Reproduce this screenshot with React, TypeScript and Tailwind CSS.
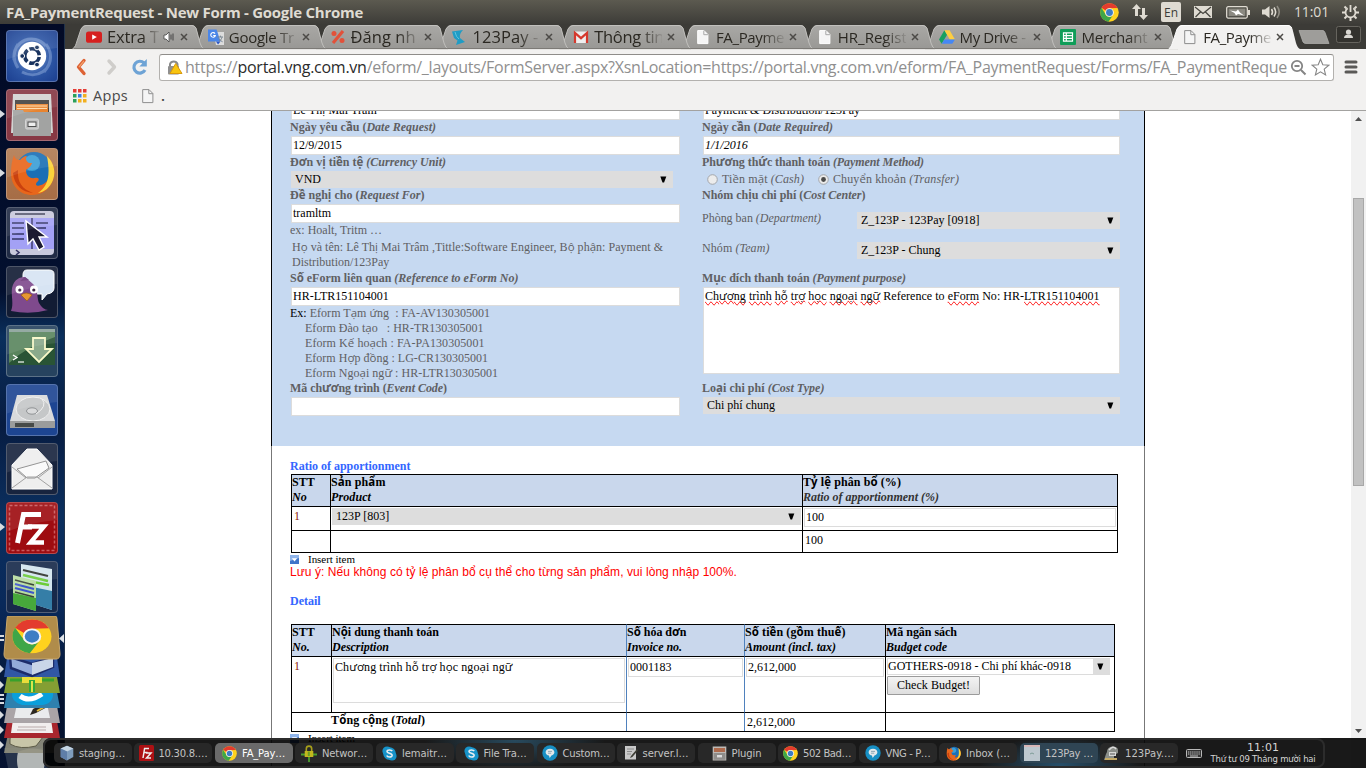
import { useLayoutEffect, useRef } from "react";
import type { ReactNode } from "react";

/* Text that is spaced out (or in) to take up a given width. */
function Fit({ w, className = "", children }: { w: number; className?: string; children: ReactNode }) {
  const ref = useRef<HTMLSpanElement>(null);
  useLayoutEffect(() => {
    const el = ref.current;
    if (!el) return;
    el.style.letterSpacing = "0px";
    const natural = el.getBoundingClientRect().width;
    const n = (el.textContent || "").length || 1;
    el.style.letterSpacing = `${(w - natural) / n}px`;
  }, [w]);
  return (
    <span ref={ref} className={`inline-block whitespace-pre ${className}`}>
      {children}
    </span>
  );
}

/* Serif text in which the stacked Vietnamese letters come from the sans face. */
function Vi({ children }: { children: string }) {
  const parts = children.split(/([ơƯưƠ\u1EA0-\u1EF9]+)/);
  return (
    <>
      {parts.map((p, i) =>
        i % 2 ? (
          <span key={i} className="font-['Open_Sans','Noto_Sans',sans-serif] text-[11.5px] leading-none">
            {p}
          </span>
        ) : (
          p
        ),
      )}
    </>
  );
}

function Label({ vi, en, w, close = "" }: { vi: string; en: string; w: number; close?: string }) {
  return (
    <div className="h-[15px] font-bold leading-[15px] text-[#5f6063]">
      <Fit w={w}>
        <Vi>{vi}</Vi>
        <i>{en}</i>
        {close}
      </Fit>
    </div>
  );
}

function Field({ children, className = "" }: { children?: ReactNode; className?: string }) {
  return (
    <div className={`ml-px mt-px h-[19px] border border-[#dcdcdc] bg-white pl-px leading-[17px] text-black ${className}`}>
      {children}
    </div>
  );
}

function Down() {
  return (
    <svg width="7" height="7" viewBox="0 0 7 7" className="shrink-0">
      <path d="M0.300 0.500H6.300L4.100 6.500H2.500Z" fill="#000" />
    </svg>
  );
}

function Select({ children, className = "" }: { children: ReactNode; className?: string }) {
  return (
    <div className={`flex h-[17px] items-center justify-between bg-[#dddddd] pl-1 pr-[6px] leading-[17px] text-black ${className}`}>
      <span>{children}</span>
      <Down />
    </div>
  );
}

function Radio({ on = false }: { on?: boolean }) {
  return (
    <svg width="11" height="11" viewBox="0 0 11 11">
      <circle cx="5.5" cy="5.5" r="4.8" fill="#ececec" stroke="#a3a6ab" />
      {on && <circle cx="5.5" cy="5.5" r="2.4" fill="#4a4a4a" />}
    </svg>
  );
}

/* ---------- small icons ---------- */

function Chrome({ s, x = 0, y = 0 }: { s: number; x?: number; y?: number }) {
  return (
    <svg width={s} height={s} x={x} y={y} viewBox="0 0 40 40" className="shrink-0">
      <circle cx="20" cy="20" r="19.5" fill="#ffd21e" />
      <path d="M3.1 10.2A19.5 19.5 0 0 1 37 10.5L20 11.2A9 9 0 0 0 12 16Z" fill="#e33b2e" />
      <path d="M3.1 10.2A19.5 19.5 0 0 0 17.8 39.4L28 24.5A9 9 0 0 1 12.2 24.5Z" fill="#3fa648" />
      <circle cx="20" cy="20" r="9.2" fill="#f3f4f5" />
      <circle cx="20" cy="20" r="7.2" fill="#3d7dc4" />
    </svg>
  );
}

function Firefox({ s }: { s: number }) {
  return (
    <svg width={s} height={s} viewBox="0 0 46 46" className="shrink-0">
      <circle cx="25" cy="20" r="18" fill="#1c6fb5" />
      <circle cx="23" cy="13" r="8" fill="#49b4e4" opacity=".7" />
      <path d="M5 5C6 9 8 10 11 10C13 8 15 6 18 6C16 9 17 11 20 13H23C22 17 19 18 17 20C17 25 20 29 26 28C30 27 31 30 28 32C24 37 33 37 38 31C42 26 43 18 38 6C45 13 47 22 44 30C40 41 31 45 23 45C11 45 2 36 2 23C2 16 3 10 5 5Z" fill="#e8661b" />
      <path d="M38 6C45 13 47 22 44 30C41 38 35 42 29 43C38 37 42 28 38 6Z" fill="#fbd33c" />
      <path d="M4 23C5 35 13 42 24 43C13 39 8 32 9 20Z" fill="#c9410f" />
    </svg>
  );
}

function Skype() {
  return (
    <svg width="15" height="15" viewBox="0 0 15 15" className="shrink-0">
      <circle cx="5" cy="5" r="4.6" fill="#1793c9" />
      <circle cx="10" cy="10" r="4.6" fill="#1793c9" />
      <circle cx="7.5" cy="7.5" r="6.3" fill="#1793c9" />
      <path d="M10.2 5.2C9.5 3.7 5.2 3.5 5 5.6C5 7.7 10.2 7 10.1 9.4C9.8 11.6 5.4 11.5 4.8 9.6" fill="none" stroke="#e8eef2" strokeWidth="1.6" />
    </svg>
  );
}

function Chat() {
  return (
    <svg width="16" height="16" viewBox="0 0 16 16" className="shrink-0">
      <circle cx="8" cy="8" r="7.7" fill="#178fc4" />
      <path d="M8 3.7C5.3 3.7 3.6 5.3 3.6 7.2C3.6 9.2 5.2 10.4 6.9 10.6L7.7 13L9.5 10.4C11.2 10 12.4 8.8 12.4 7.2C12.4 5.3 10.7 3.7 8 3.7Z" fill="#e2e8eb" />
      <path d="M6 6.4H10M6 8.2H9.2" stroke="#7b99aa" strokeWidth=".8" />
    </svg>
  );
}

function Cube() {
  return (
    <svg width="14" height="16" viewBox="0 0 14 16" className="shrink-0">
      <path d="M7 .7L13.3 3.5V12L7 15.4L.7 12V3.5Z" fill="#7f9dbd" />
      <path d="M7 .7L13.3 3.5L7 6.4L.7 3.5Z" fill="#c5d5e3" />
      <path d="M7 6.4V15.4L.7 12V3.5Z" fill="#5f7ea8" />
    </svg>
  );
}

function FzSmall() {
  return (
    <svg width="15" height="16" viewBox="0 0 15 16" className="shrink-0">
      <rect width="15" height="16" rx="1.5" fill="#ad1114" />
      <path d="M4 13L5.6 3.5H10M4.8 7.6H8.6M7 8H12L7.5 13H12" fill="none" stroke="#eee" strokeWidth="1.5" />
    </svg>
  );
}

function Netlock() {
  return (
    <svg width="16" height="17" viewBox="0 0 16 17" className="shrink-0">
      <path d="M0 9.5H16M8 9V17" stroke="#49a02c" strokeWidth="1.8" />
      <rect x="3.7" y="6" width="8.6" height="6" fill="#c2b71f" />
      <path d="M5.3 6V3.8A2.7 2.7 0 0 1 10.7 3.8V6" fill="none" stroke="#a8a01a" strokeWidth="1.6" />
      <rect x="6.8" y="6.5" width="2" height="4.5" fill="#6a9e22" />
    </svg>
  );
}

function Notepad() {
  return (
    <svg width="14" height="16" viewBox="0 0 14 16" className="shrink-0">
      <rect x="1" y="1" width="11" height="13.5" fill="#c9c9c9" />
      <path d="M3 4H10M3 6.5H8M3 9H7" stroke="#8a8a8a" />
      <path d="M13 4L7 11L6 13L8.3 12L14 5.4Z" fill="#3d3d34" />
    </svg>
  );
}

function Cabinet() {
  return (
    <svg width="15" height="15" viewBox="0 0 15 15" className="shrink-0">
      <rect x=".7" y=".5" width="13.6" height="14" fill="#bdb9b5" />
      <path d="M2 3H13M2 5H13" stroke="#a8502a" strokeWidth="1.4" />
      <rect x="1.6" y="7" width="11.8" height="6.8" fill="#8f8d8a" />
      <rect x="5" y="9" width="5" height="2.4" fill="#ddd" />
    </svg>
  );
}

function PageShot() {
  return (
    <svg width="16" height="16" viewBox="0 0 16 16" className="shrink-0">
      <rect width="16" height="16" fill="#bdc8cf" />
      <rect width="16" height="2" fill="#d8b7b7" />
      <path d="M6 9Q8 7 10 9" stroke="#7e9c97" fill="none" />
    </svg>
  );
}

function Stamp() {
  return (
    <svg width="16" height="16" viewBox="0 0 16 16" className="shrink-0">
      <path d="M3 7C3 0 14 0 14 5V8L10 10V15H0L2 9Z" fill="#8b8e89" />
      <path d="M5 5Q9 0 12 4" stroke="#dadada" strokeWidth="1.6" fill="none" />
      <path d="M1 14H13" stroke="#c6ab65" strokeWidth="2" />
      <rect x="5" y="7" width="7" height="4" fill="#d7d8d6" />
      <path d="M6 9H11" stroke="#555" />
    </svg>
  );
}

function Doc({ line = "#fff" }: { line?: string }) {
  return (
    <svg width="16" height="16" viewBox="0 0 16 16" className="shrink-0">
      <path d="M2.7 1.6H9L12.9 5.5V14.6H2.7Z" fill="#f5f5f5" stroke={line} strokeWidth="1" />
      <path d="M8.8 1.6V5.7H12.9" fill="none" stroke={line === "#fff" ? "#a8a8a8" : line} strokeWidth="1" />
    </svg>
  );
}

/* ---------- browser tabs ---------- */

const ytIcon = (
  <svg width="16" height="16" viewBox="0 0 16 16">
    <rect y="2.4" width="16" height="11.4" rx="2.6" fill="#d6201f" />
    <path d="M6.2 5.4L10.8 8.1L6.2 10.8Z" fill="#fff" />
  </svg>
);
const trIcon = (
  <svg width="16" height="16" viewBox="0 0 16 16">
    <path d="M5 3H16V16H8Z" fill="#dcdcdc" />
    <path d="M0 .5H8.6L12.5 12.6H0Z" fill="#4a86e8" />
    <path d="M7 4.6A2.3 2.3 0 1 0 7.3 6.5H5.2" stroke="#fff" strokeWidth="1.1" fill="none" />
    <path d="M8 12.6H12.5L10 15.5Z" fill="#2a56c6" />
    <path d="M9.5 8H15M12.4 6.6V8M14 8.2C13.4 10.5 12 11.8 11 12.4M11 9.5Q12.4 12 14.6 12.8" stroke="#7a8791" fill="none" />
  </svg>
);
const pctIcon = (
  <svg width="16" height="16" viewBox="0 0 16 16">
    <path d="M13 2L3 14" stroke="#e2513a" strokeWidth="3.2" />
    <circle cx="4" cy="4.6" r="2.5" fill="#e2513a" />
    <circle cx="12" cy="11.6" r="2.5" fill="#e2513a" />
  </svg>
);
const payIcon = (
  <svg width="16" height="16" viewBox="0 0 16 16">
    <path d="M1 2.5L12 1Q8 5 9 9L14 13L5 16L6.5 11.5L3 9Z" fill="#1f9cc5" />
    <path d="M4 3Q5 8 8 10" stroke="#5fc4de" fill="none" />
  </svg>
);
const gmIcon = (
  <svg width="16" height="16" viewBox="0 0 16 16">
    <rect x="1" y="2.6" width="14" height="11.4" rx="1" fill="#eee" />
    <path d="M2 14V4L8 9.2L14 4V14" fill="none" stroke="#d5392d" strokeWidth="2.2" />
  </svg>
);
const driveIcon = (
  <svg width="16" height="16" viewBox="0 0 16 16">
    <path d="M5.4 1.2L0 10.4L2.7 14.8L8.1 5.7Z" fill="#18a060" />
    <path d="M5.4 1.2H10.6L16 10.4H10.8Z" fill="#fdce41" />
    <path d="M2.7 14.8L5.4 10.4H16L13.3 14.8Z" fill="#4587f4" />
  </svg>
);
const sheetIcon = (
  <svg width="16" height="16" viewBox="0 0 16 16">
    <rect width="16" height="16" rx="1" fill="#0f9d58" />
    <path d="M3.5 3.8H12.5V12.2H3.5ZM3.5 6.6H12.5M3.5 9.4H12.5M6.3 3.8V12.2" fill="none" stroke="#fff" strokeWidth="1.2" />
  </svg>
);

type TabInfo = { icon: ReactNode; title: string; w: number; big?: boolean; sound?: boolean; active?: boolean };
const tabs: TabInfo[] = [
  { icon: ytIcon, title: "Extra T", w: 52, big: true, sound: true },
  { icon: trIcon, title: "Google Tr", w: 65 },
  { icon: pctIcon, title: "Đăng nh", w: 65, big: true },
  { icon: payIcon, title: "123Pay -", w: 66, big: true },
  { icon: gmIcon, title: "Thông tin", w: 70, big: true },
  { icon: <Doc />, title: "FA_Payme", w: 68 },
  { icon: <Doc />, title: "HR_Regist", w: 69 },
  { icon: driveIcon, title: "My Drive -", w: 66 },
  { icon: sheetIcon, title: "Merchant", w: 66 },
  { icon: <Doc line="#8d8d8d" />, title: "FA_Payme", w: 68, active: true },
];

function Tab({ t, z }: { t: TabInfo; z: number }) {
  return (
    <div className="relative flex h-[25px] w-[121.8px] shrink-0 items-center pl-[14px]" style={{ zIndex: z }}>
      <svg className="absolute left-0 top-0 overflow-visible" width="131" height="25" viewBox="0 0 131 25">
        <defs>
          <linearGradient id="tabgrey" x1="0" y1="0" x2="0" y2="1">
            <stop offset="0" stopColor="#a9a8a5" />
            <stop offset="1" stopColor="#999895" />
          </linearGradient>
        </defs>
        <path
          d="M0 25C3 24 4 20 5 17L9 5Q11 1 14 1H120Q123 1 124.500 5L128 19Q129.500 24 132 25Z"
          fill={t.active ? "#f2f1f0" : "url(#tabgrey)"}
          stroke="none"
        />
        {!t.active && (
          <>
            <path d="M124 4L128 19Q129.500 24 132 25" stroke="#c4c3c0" strokeWidth="0.900" fill="none" />
            <path d="M0 24.600H132" stroke="#75736f" strokeWidth="0.900" />
          </>
        )}
        <path d="M1 24.500C3.500 23 4 20 5 17L9 5Q11 1.500 14 1.500H120Q122 1.500 124 4" stroke={t.active ? "#fff" : "#c4c3c0"} strokeWidth="0.900" fill="none" />
      </svg>
      <span className="relative h-4 w-4">{t.icon}</span>
      <span
        className={`relative ml-[5px] h-[24px] overflow-hidden font-['Open_Sans','Noto_Sans',sans-serif] leading-[24px] text-[#2b2822] [mask-image:linear-gradient(to_right,#000_68%,transparent_104%)] ${
          t.sound ? "w-[52px]" : "w-[68px]"
        } ${t.big ? "text-[16.5px]" : "text-[15px] font-medium"}`}
      >
        <Fit w={t.w}>{t.title}</Fit>
      </span>
      {t.sound && (
        <svg className="relative ml-[4px]" width="12" height="12" viewBox="0 0 12 12">
          <path d="M1 4H3L6 1V11L3 8H1Z" fill="#fff" stroke="#444" strokeWidth=".8" />
          <path d="M8 3.5V8.5M10 2.5V9.5" stroke="#444" />
        </svg>
      )}
      <svg className="relative ml-[5px]" width="8" height="8" viewBox="0 0 8 8">
        <path d="M1 1L7 7M7 1L1 7" stroke="#4c4a47" strokeWidth="1.5" />
      </svg>
    </div>
  );
}

/* ---------- launcher ---------- */

function Tile({ bg, run = false, children }: { bg: string; run?: boolean; children: ReactNode }) {
  return (
    <div className="relative h-[52px] w-[65px] pl-[6px]">
      {run && (
        <svg className="absolute left-0 top-[21px]" width="5" height="8" viewBox="0 0 5 8">
          <path d="M0 0L5 4L0 8Z" fill="#d7dbe0" />
        </svg>
      )}
      <div className={`h-[52px] w-[52px] overflow-hidden rounded-[4px] border border-white/25 ${bg}`}>
        <svg width="50" height="50" viewBox="1 1 50 50">
          {children}
          <path d="M0 0H52V18Q26 20 0 30Z" fill="#fff" opacity=".09" />
        </svg>
      </div>
    </div>
  );
}

function Launcher() {
  return (
    <div className="flex w-[65px] shrink-0 flex-col gap-[7px] border-r border-[#20324a] bg-[linear-gradient(to_bottom,#020a26_0%,#03102f_36%,#0a2f5c_42%,#071c42_54%,#0b2f5e_66%,#09295a_78%,#04122f_92%,#061331_100%)] pt-[6px]">
      <Tile bg="bg-[radial-gradient(circle,#8fb0de_0%,#2c55a4_55%,#1c3f90_100%)]">
        <path d="M8 30C6 10 28 2 40 16M44 22C48 40 30 50 16 42M12 38Q4 26 12 14M40 14Q50 28 38 42" stroke="#9bb6e2" strokeWidth="3" fill="none" opacity=".45" />
        <circle cx="26" cy="26" r="14.2" fill="#fff" />
        <circle cx="26" cy="26" r="7.3" fill="none" stroke="#19335f" strokeWidth="3.6" strokeDasharray="13.2 2.1" strokeDashoffset="-1" />
        <circle cx="16.2" cy="26" r="2.4" fill="#19335f" stroke="#fff" />
        <circle cx="31" cy="17.4" r="2.4" fill="#19335f" stroke="#fff" />
        <circle cx="31" cy="34.6" r="2.4" fill="#19335f" stroke="#fff" />
      </Tile>
      <Tile bg="bg-[#873844]" run>
        <path d="M7 5H45L47 44H5Z" fill="#d3d3d2" />
        <path d="M9 11H43V24H9Z" fill="#454240" />
        <path d="M10 15H42V24H10Z" fill="#e88430" />
        <path d="M11 17H41M11 19.5H41" stroke="#ffd9a6" />
        <path d="M7 21H17L18 23H45V47H7Z" fill="#a2a3a2" />
        <rect x="19.5" y="30" width="13" height="10" rx="1.5" fill="#bfbfbf" stroke="#d5d5d5" />
        <rect x="22" y="33" width="8" height="4.5" fill="#eee" stroke="#4e4e4e" />
      </Tile>
      <Tile bg="bg-[linear-gradient(to_bottom,#b17a52,#a66d46)]" run>
        <g transform="translate(3 2)">
          <Firefox s={46} />
        </g>
      </Tile>
      <Tile bg="bg-[#202b45]">
        <rect x="4" y="4" width="44" height="44" rx="4" fill="#c8c9dc" />
        <rect x="4" y="11" width="44" height="31" fill="#a3a1f5" />
        <path d="M9 7H39" stroke="#3b3b55" strokeWidth="1.4" />
        <path d="M26 11V42M6 16H18M6 21H18M6 27H18M6 32H18M30 16H42M30 21H40" stroke="#353464" strokeWidth="1.4" />
        <path d="M10 43L13 45.5L10 48" stroke="#353464" fill="none" strokeWidth="1.6" />
        <path d="M20 14L22 37L27 32L33 43L38 40L33 30H41Z" fill="#1b1a31" stroke="#fff" strokeWidth="1.4" />
      </Tile>
      <Tile bg="bg-[#121c34]">
        <path d="M21 4Q17 4 17 9V23Q17 28 23 28H36V34L41 28Q48 27 48 22V8Q48 4 43 4Z" fill="#d7e4f3" stroke="#fff" />
        <path d="M5 45C8 38 5 31 6 22C8 13 14 11 19 11L27 18C32 22 31 33 33 37Q37 44 42 44Q24 49 5 45Z" fill="#7f4a8d" />
        <path d="M19 11L14 15L23 14Z" fill="#6a3578" />
        <circle cx="13.5" cy="23.5" r="4" fill="#fff" />
        <circle cx="28" cy="23.5" r="4" fill="#fff" />
        <circle cx="13.8" cy="24" r="1.6" fill="#3a2340" />
        <circle cx="27.8" cy="24" r="1.6" fill="#3a2340" />
        <path d="M15 29Q20 25 26 29L21 35Z" fill="#e69731" stroke="#9a5a14" strokeWidth=".7" />
      </Tile>
      <Tile bg="bg-[#26435f]">
        <rect x="3" y="4" width="46" height="36" fill="#295435" />
        <path d="M3 6H49V12Q20 22 3 38Z" fill="#6f9a70" opacity=".7" />
        <path d="M3 5.5H49" stroke="#8ba29a" strokeWidth="3" />
        <path d="M7 30L11 32.5L7 35" stroke="#fff" fill="none" strokeWidth="1.3" />
        <path d="M12 37H18" stroke="#cfd9d0" strokeWidth="1.5" />
        <path d="M27 13H39V24H46L33 37L20 24H27Z" fill="#8aa98b" stroke="#f8f8c8" strokeWidth="1.8" />
      </Tile>
      <Tile bg="bg-[#1d4592]">
        <path d="M11 11H41L49 37H4Z" fill="#d9dadb" />
        <ellipse cx="27" cy="25" rx="17" ry="12" fill="#c5c7c8" stroke="#f0f0f0" />
        <ellipse cx="26" cy="27" rx="5.5" ry="3.2" fill="#d9dadb" stroke="#8f9294" />
        <path d="M36 15Q42 22 30 30" stroke="#f0f0f0" fill="none" />
        <path d="M4 37H49V44H4Z" fill="#9b9c9c" />
        <path d="M9 39H28V43H9Z" fill="#474a48" />
      </Tile>
      <Tile bg="bg-[#18243e]">
        <path d="M6 22L21 6H31L46 22V46H6Z" fill="#eeeeee" stroke="#fff" />
        <path d="M11 26L40 18L43 25L29 35H21Z" fill="#fafafa" stroke="#8f8f8f" />
        <path d="M6 45L21 34H31L46 45M6 24L20 35M46 24L32 35" stroke="#a2a2a2" fill="none" />
      </Tile>
      <Tile bg="bg-[#9e0c10]" run>
        <rect x="3.5" y="3.5" width="45" height="45" fill="none" stroke="#c85b5e" strokeWidth="1.5" strokeDasharray="3 2" />
        <path d="M11.500 41L17.500 12.500H35M14.500 25H26" fill="none" stroke="#fff" strokeWidth="5" />
        <path d="M22 24.500H38L24.500 40.500H38" fill="none" stroke="#fff" strokeWidth="4.400" />
      </Tile>
      <Tile bg="bg-[#17294a]">
        <path d="M15 3L46 8V49L15 39Z" fill="#d3e5ee" />
        <path d="M17 24L46 30V49L17 40Z" fill="#357ea7" />
        <path d="M17 9L42 15" stroke="#30342d" strokeWidth="2" />
        <path d="M17 14L42 20M17 19L43 24" stroke="#6dcc3a" strokeWidth="2.6" />
        <path d="M7 14L30 20V50L7 43Z" fill="#b8dca0" />
        <path d="M7 32L30 37V50L7 43Z" fill="#47a83b" />
        <path d="M9 19L28 24M9 31L28 36" stroke="#39433a" strokeWidth="1.5" />
        <path d="M9 23L28 28M9 27L28 32" stroke="#3e55cb" strokeWidth="2" />
      </Tile>
      <svg className="-mt-[4px] shrink-0" width="64" height="152" viewBox="0 0 64 152">
        <path d="M4 132L60 132L58 150Q56 152 50 152H8Z" fill="#26334b" />
        <path d="M18 136Q16 144 18 152H44Q46 140 43 134Q30 130 18 136Z" fill="#b2b6b5" />
        <path d="M8 118H56L60 137H4Z" fill="#92917f" opacity=".9" />
        <path d="M10 124Q9 118 20 120L34 118Q44 114 43 121L36 130Q20 134 10 128Z" fill="#c8c5a8" stroke="#5e5c48" />
        <path d="M7 105H57L60 122H4Z" fill="#a8262d" />
        <path d="M13 103H51L53 117H11Z" fill="#f1eeee" />
        <path d="M18 111H46M17 114H46" stroke="#b9aaaa" />
        <path d="M7 90H57L60 107H4Z" fill="#aaa4a7" />
        <path d="M17 88H47L50 102H14Z" fill="#eaebed" />
        <path d="M30 99L33 93L46 86L49 90L36 97Z" fill="#2c2720" />
        <path d="M37 95L46 90" stroke="#e8bd3d" strokeWidth="2" />
        <path d="M7 76H57L60 92H4Z" fill="#2f80ae" />
        <path d="M12 76H53Q54 87 43 89H22Q11 86 12 76Z" fill="#0a9fdb" />
        <path d="M20 80Q29 87 42 78" stroke="#fff" strokeWidth="5" fill="none" />
        <path d="M7 61H57L60 77H4Z" fill="#849f33" />
        <path d="M10 64H54" stroke="#38a12c" strokeWidth="3" />
        <rect x="22" y="61" width="20" height="6" fill="#e9dd3a" />
        <path d="M32 64V76" stroke="#30aa38" strokeWidth="6" />
        <path d="M32 65V76" stroke="#dce44b" strokeWidth="2" />
        <path d="M7 42H57L60 61H4Z" fill="#3157a4" />
        <path d="M10 41L32 48L53 41V51L32 60L11 52Z" fill="#93aada" stroke="#1c2c6b" strokeWidth="2.5" />
        <path d="M32 47L53 42V51L32 59Z" fill="#c9d6e8" />
        <path d="M8 0H55Q57 0 57 3L60 38Q60 43 56 43H8Q4 43 4 38L7 3Q7 0 8 0Z" fill="#b08c4a" stroke="#c9a86c" />
        <g transform="translate(12 3) scale(1 .87)">
          <Chrome s={40} />
        </g>
        <path d="M64 18V27L59 22.5Z" fill="#dfe3e8" />
        <path d="M0 20H4M0 24H4M0 79H4M0 83H4M0 87H4" stroke="#d7dbe0" strokeWidth="2" />
        <path d="M0 49L4 53L0 57ZM0 65L4 69L0 73ZM0 95L4 99L0 103ZM0 110L4 114L0 118ZM0 125L4 129L0 133Z" fill="#d7dbe0" />
      </svg>
    </div>
  );
}

/* ---------- top panel ---------- */

function TopPanel() {
  return (
    <div className="flex h-6 shrink-0 items-center justify-between bg-[linear-gradient(to_bottom,#5c5a50,#3d3c38)] pl-[6px] font-['Open_Sans','Noto_Sans',sans-serif] text-[#dfdbd2]">
      <Fit w={357} className="text-[15px] font-bold leading-6">
        FA_PaymentRequest - New Form - Google Chrome
      </Fit>
      <div className="flex h-6 items-center pr-[7px]">
        <Chrome s={19} />
        <svg className="ml-[12px]" width="18" height="18" viewBox="0 0 18 18">
          <path d="M5.5 1L10 6H7V13H4V6H1ZM12.5 17L8 12H11V5H14V12H17Z" fill="#dfdbd2" />
        </svg>
        <span className="ml-[12px] flex h-5 w-5 items-center justify-center rounded-[2px] bg-[#dfdbd2] pt-px text-[12px] font-medium text-[#3c3b37]">En</span>
        <svg className="ml-[13px]" width="18" height="14" viewBox="0 0 18 14">
          <rect y="1" width="18" height="12" fill="#dfdbd2" />
          <path d="M1 2L9 8.5L17 2M1.5 12L6.5 7M16.5 12L11.5 7" stroke="#45443e" strokeWidth="1.2" fill="none" />
        </svg>
        <svg className="ml-[14px]" width="24" height="13" viewBox="0 0 24 13">
          <rect x=".7" y=".7" width="20.6" height="11.4" rx="1.5" fill="none" stroke="#dfdbd2" strokeWidth="1.3" />
          <rect x="2.6" y="2.600" width="16.8" height="7.600" fill="#8b8981" />
          <rect x="22" y="4" width="2" height="5" fill="#dfdbd2" />
          <path d="M4 4.500L10 5.500L12 3.500L14 6.500L18 9.500L12 8L10 9.500L8.500 7Z" fill="#fff" />
        </svg>
        <svg className="ml-[12px]" width="20" height="16" viewBox="0 0 20 16">
          <path d="M0 5.5H3L7.5 2V14L3 10.5H0Z" fill="#dfdbd2" />
          <path d="M9.5 5Q11.5 8 9.5 11M12 3.5Q15.3 8 12 12.5" stroke="#dfdbd2" strokeWidth="1.6" fill="none" />
          <path d="M15 2Q19.5 8 15 14" stroke="#8e8b82" strokeWidth="1.6" fill="none" />
        </svg>
        <Fit w={35} className="ml-[12px] text-[14px] leading-6">
          11:01
        </Fit>
        <svg className="ml-[13px]" width="17" height="17" viewBox="0 0 17 17">
          <path d="M5.700 4.300A5 5 0 1 0 11.300 4.300" stroke="#dfdbd2" strokeWidth="1.800" fill="none" />
          <path d="M8.5 1V8" stroke="#dfdbd2" strokeWidth="1.8" />
          <path d="M2.500 2.500L4.5 4.5M14.500 2.500L12.5 4.5M0 8.5H3M17 8.5H14M2.500 14.500L4.700 12.300M14.500 14.500L12.300 12.300M8.500 17V14" stroke="#dfdbd2" strokeWidth="2" />
        </svg>
      </div>
    </div>
  );
}

/* ---------- browser chrome ---------- */

function Toolbar() {
  return (
    <div className="flex h-[62px] shrink-0 flex-col border-b border-[#a3a2a0] bg-[#f2f1f0] font-['Open_Sans','Noto_Sans',sans-serif]">
      <div className="flex h-[32px] items-center pt-[4px]">
        <svg className="ml-[10px]" width="12" height="18" viewBox="0 0 12 18">
          <path d="M9 2.500L3.500 9L9 15.500" stroke="#dd6234" strokeWidth="3.400" fill="none" strokeLinejoin="round" strokeLinecap="round" />
          <path d="M9 2.800L4 9" stroke="#f4a36d" strokeWidth="1.200" fill="none" />
        </svg>
        <svg className="ml-[19px]" width="12" height="18" viewBox="0 0 12 18">
          <path d="M3 3L8.500 9L3 15" stroke="#cfcdca" strokeWidth="3.400" fill="none" strokeLinejoin="round" strokeLinecap="round" />
        </svg>
        <svg className="ml-[13px]" width="17" height="18" viewBox="0 0 17 18">
          <path d="M14 12A5.900 5.900 0 1 1 13 5" stroke="#6ea3d5" strokeWidth="3.200" fill="none" />
          <path d="M15.800 1V8.500H8.300Z" fill="#6ea3d5" />
        </svg>
        <div className="ml-[11px] flex h-[27px] w-[1175px] items-center rounded-[3px] border border-[#b3b1ae] border-t-[#8f8d8a] bg-white pl-[7px]">
          <svg width="16" height="17" viewBox="0 0 16 17" className="shrink-0">
            <path d="M3 8V5A4 4 0 0 1 10.500 5V8" fill="none" stroke="#8a8a8a" strokeWidth="2" />
            <rect x="1" y="7" width="11" height="8.500" rx="1" fill="#8f8f8f" />
            <path d="M8.700 4.500L15 14.500H3Z" fill="#f8c510" stroke="#d99a0c" strokeLinejoin="round" />
          </svg>
          <span className="ml-[2px] w-[1104px] shrink-0">
            <Fit w={1102} className="text-[16px] leading-[24px] text-[#8f8f8f]">
              https://<span className="text-[#2b2b2b]">portal.vng.com.vn</span>
              /eform/_layouts/FormServer.aspx?XsnLocation=https://portal.vng.com.vn/eform/FA_PaymentRequest/Forms/FA_PaymentReque
            </Fit>
          </span>
          <svg className="ml-px shrink-0" width="17" height="17" viewBox="0 0 17 17">
            <circle cx="7" cy="7" r="5.200" fill="none" stroke="#858585" strokeWidth="1.800" />
            <path d="M4.500 7H9.500M11 11L15.500 15.500" stroke="#858585" strokeWidth="2" />
          </svg>
          <svg className="ml-[4px] shrink-0" width="19" height="18" viewBox="0 0 19 18">
            <path d="M9.500 1.200L11.800 6.700L17.800 7.200L13.200 11.100L14.600 16.900L9.500 13.800L4.400 16.900L5.800 11.100L1.200 7.200L7.200 6.700Z" fill="#fff" stroke="#858585" strokeWidth="1.100" />
          </svg>
        </div>
        <svg className="ml-[10px]" width="14" height="14" viewBox="0 0 14 14">
          <path d="M2 2H12M2 7H12M2 12H12" stroke="#5a5957" strokeWidth="3" strokeLinecap="round" />
        </svg>
      </div>
      <div className="flex h-[29px] items-center pl-[8px] text-[14.500px] text-[#4a4a4a]">
        <svg width="14" height="14" viewBox="0 0 14 14">
          <path d="M0 0h3.500v3.500h-3.500zM5 0h3.500v3.500h-3.500zM10 0h3.500v3.500h-3.500z" fill="#e53b34" />
          <path d="M0 5h3.500v3.500h-3.500zM0 10h3.500v3.500h-3.500z" fill="#2aa05a" />
          <path d="M5 5h3.500v3.500h-3.500z" fill="#3b7de2" />
          <path d="M10 5h3.500v3.500h-3.500zM5 10h3.500v3.500h-3.500zM10 10h3.500v3.500h-3.500z" fill="#f2b01e" />
        </svg>
        <Fit w={35} className="ml-[6px]">
          Apps
        </Fit>
        <span className="ml-[12px]">
          <Doc line="#8f8f8f" />
        </span>
        <span className="ml-[5px] font-semibold">.</span>
      </div>
    </div>
  );
}

/* ---------- form ---------- */

function Request() {
  return (
    <div className="flex h-[335px] border-x border-black bg-[#c6d9f1] text-[12px] text-[#5f6063]">
      <div className="ml-[18px] w-[390px]">
        <div className="ml-px h-[9px] overflow-hidden border border-t-0 border-[#dcdcdc] bg-white pl-px text-black">
          <div className="-mt-[8px] leading-[15px]">
            <Fit w={84}>
              <Vi>Lê Thị Mai Trâm</Vi>
            </Fit>
          </div>
        </div>
        <Label vi="Ngày yêu cầu (" en="Date Request)" w={146} />
        <Field>12/9/2015</Field>
        <Label vi="Đơn vị tiền tệ " en="(Currency Unit)" w={156} />
        <Select className="ml-px mt-px w-[382px]">VND</Select>
        <Label vi="Đề nghị cho (" en="Request For" close=")" w={134.500} />
        <Field>tramltm</Field>
        <div className="h-[17px] leading-[15px]">
          <Fit w={92}>ex: Hoalt, Tritm …</Fit>
        </div>
        <div className="h-[31px] pl-[2px] leading-[15px]">
          <div className="h-[15px]">
            <Fit w={371}>
              <Vi>Họ và tên: Lê Thị Mai Trâm ,Tittle:Software Engineer, Bộ phận: Payment &</Vi>
            </Fit>
          </div>
          <div className="h-[15px]">Distribution/123Pay</div>
        </div>
        <Label vi="Số eForm liên quan " en="(Reference to eForm No)" w={228.500} />
        <Field>HR-LTR151104001</Field>
        <div className="h-[75px] leading-[15px]">
          <div className="h-[15px]">
            <Fit w={200}>
              <span className="text-black">Ex:</span>
              <Vi>{" Eform Tạm ứng  : FA-AV130305001"}</Vi>
            </Fit>
          </div>
          <div className="h-[15px] pl-[15px]">
            <Fit w={178.500}>
              <Vi>{"Eform Đào tạo   : HR-TR130305001"}</Vi>
            </Fit>
          </div>
          <div className="h-[15px] pl-[15px]">
            <Fit w={179.500}>
              <Vi>Eform Kế hoạch : FA-PA130305001</Vi>
            </Fit>
          </div>
          <div className="h-[15px] pl-[15px]">
            <Fit w={183}>
              <Vi>Eform Hợp đồng : LG-CR130305001</Vi>
            </Fit>
          </div>
          <div className="h-[15px] pl-[15px]">
            <Fit w={193}>
              <Vi>Eform Ngoại ngữ : HR-LTR130305001</Vi>
            </Fit>
          </div>
        </div>
        <Label vi="Mã chương trình (" en="Event Code" close=")" w={157} />
        <Field />
      </div>
      <div className="ml-[22px] w-[418px]">
        <div className="ml-px h-[9px] overflow-hidden border border-t-0 border-[#dcdcdc] bg-white pl-px text-black">
          <div className="-mt-[8px] leading-[15px]">
            <Fit w={155}>Payment & Distribution/123Pay</Fit>
          </div>
        </div>
        <Label vi="Ngày cần (" en="Date Required)" w={131} />
        <Field className="italic">1/1/2016</Field>
        <Label vi="Phương thức thanh toán " en="(Payment Method)" w={222} />
        <div className="flex h-[18px] items-center pl-[5px] leading-[17px]">
          <Radio />
          <Fit w={82} className="ml-[4px]">
            <Vi>Tiền mặt </Vi>
            <i>(Cash)</i>
          </Fit>
          <span className="ml-[14px] flex">
            <Radio on />
          </span>
          <Fit w={126} className="ml-[4px]">
            <Vi>Chuyển khoản </Vi>
            <i>(Transfer)</i>
          </Fit>
        </div>
        <Label vi="Nhóm chịu chi phí (" en="Cost Center" close=")" w={163.500} />
        <div className="mt-[8px] flex h-[30px] leading-[15px]">
          <span className="w-[155px]">
            <Fit w={119}>
              Phòng ban <i>(Department)</i>
            </Fit>
          </span>
          <Select className="mt-px flex-1">Z_123P - 123Pay [0918]</Select>
        </div>
        <div className="flex h-[30px] leading-[15px]">
          <span className="w-[155px]">
            <Fit w={67.500}>
              Nhóm <i>(Team)</i>
            </Fit>
          </span>
          <Select className="mt-px flex-1">Z_123P - Chung</Select>
        </div>
        <Label vi="Mục đích thanh toán " en="(Payment purpose)" w={204} />
        <div className="ml-px mt-px h-[87px] border border-[#dcdcdc] bg-white pl-px leading-[17px] text-black">
          <Fit w={394.500}>
            {["Chương", "trình", "hỗ", "trợ", "học", "ngoại", "ngữ"].map((word) => (
              <span key={word}>
                <span className="[text-decoration-line:spelling-error]">
                  <Vi>{word}</Vi>
                </span>{" "}
              </span>
            ))}
            Reference to <span className="[text-decoration-line:spelling-error]">eForm</span> No: HR-
            <span className="[text-decoration-line:spelling-error]">LTR151104001</span>
          </Fit>
        </div>
        <div className="h-[7px]" />
        <Label vi="Loại chi phí " en="(Cost Type)" w={122.500} />
        <Select className="ml-px mt-px">Chi phí chung</Select>
      </div>
    </div>
  );
}

function Head({ vi, en, w, w2, light = false }: { vi: string; en: string; w?: number; w2?: number; light?: boolean }) {
  return (
    <div className="h-[31px] bg-[#c9d7ec] font-bold leading-[15px]">
      <div className="h-[15px]">
        {w ? (
          <Fit w={w}>
            <Vi>{vi}</Vi>
          </Fit>
        ) : (
          vi
        )}
      </div>
      <div className={`h-[15px] italic ${light ? "text-[#333]" : ""}`}>{w2 ? <Fit w={w2}>{en}</Fit> : en}</div>
    </div>
  );
}

function InsertItem() {
  return (
    <div className="flex h-[11px] items-center text-[11px] leading-[11px]">
      <svg width="9" height="9" viewBox="0 0 9 9">
        <rect width="9" height="9" fill="#3f74c9" />
        <path d="M0 0H9V3L0 6Z" fill="#8fb4ea" />
        <path d="M1.800 3.200H7.200L4.500 6.400Z" fill="#fff" />
      </svg>
      <Fit w={47} className="ml-[9px]">
        Insert item
      </Fit>
    </div>
  );
}

function Tables() {
  return (
    <div className="flex-1 border-x border-[#777] bg-white pl-[18px] pt-[13px] text-[12px] leading-[15px] text-black">
      <div className="h-[15px] font-bold text-[#3366ff]">
        <Fit w={120.500}>Ratio of apportionment</Fit>
      </div>
      <div className="ml-px grid w-[827px] grid-cols-[39px_472px_315px] grid-rows-[32px_24px_22px] border-b border-r border-black [&>*]:border-l [&>*]:border-t [&>*]:border-black">
        <div>
          <Head vi="STT" en="No" />
        </div>
        <div>
          <Head vi="Sản phẩm" en="Product" w={54.500} w2={40} />
        </div>
        <div>
          <Head vi="Tỷ lệ phân bổ (%)" en="Ratio of apportionment (%)" w={98} w2={136} light />
        </div>
        <div className="pl-[2px] pt-[2px] text-[#8f2408]">1</div>
        <div className="pl-px pr-px pt-px">
          <Select>123P [803]</Select>
        </div>
        <div className="pl-px pr-px pt-px">
          <div className="h-[19px] border border-[#dcdcdc] pl-px leading-[17px]">100</div>
        </div>
        <div />
        <div />
        <div className="pl-[2px] pt-[2px]">100</div>
      </div>
      <div className="mt-px">
        <InsertItem />
      </div>
      <div className="h-[15px] font-['Liberation_Sans',Arial,sans-serif] leading-[15px] text-[#ff0000]">
        <Fit w={447}>Lưu ý: Nếu không có tỷ lệ phân bổ cụ thể cho từng sản phẩm, vui lòng nhập 100%.</Fit>
      </div>
      <div className="mt-[14px] h-[15px] font-bold text-[#3366ff]">Detail</div>
      <div className="ml-px mt-[15px] grid w-[824px] grid-cols-[40px_295px_118px_141px_229px] grid-rows-[32px_56px_19px] border-b border-r border-black [&>*]:border-l [&>*]:border-t [&>*]:border-t-black">
        <div className="border-l-black">
          <Head vi="STT" en="No." />
        </div>
        <div className="border-l-black">
          <Head vi="Nội dung thanh toán" en="Description" w={107} w2={57} />
        </div>
        <div className="border-l-[#4f81bd]">
          <Head vi="Số hóa đơn" en="Invoice no." w={59.500} w2={55} />
        </div>
        <div className="border-l-[#4f81bd]">
          <Head vi="Số tiền (gồm thuế)" en="Amount (incl. tax)" w={100.500} w2={91} />
        </div>
        <div className="border-l-black">
          <Head vi="Mã ngân sách" en="Budget code" w={71} w2={61} />
        </div>
        <div className="border-l-black pl-[2px] pt-[2px] text-[#8f2408]">1</div>
        <div className="border-l-black pl-px pr-px pt-px">
          <div className="h-[45px] border border-[#dcdcdc] pl-px leading-[17px]">
            <Fit w={177.500}>
              <Vi>Chương trình hỗ trợ học ngoại ngữ</Vi>
            </Fit>
          </div>
        </div>
        <div className="border-l-[#4f81bd] pl-px pr-px pt-px">
          <div className="h-[19px] border border-[#dcdcdc] pl-px leading-[17px]">0001183</div>
        </div>
        <div className="border-l-[#4f81bd] pl-px pr-px pt-px">
          <div className="h-[19px] border border-[#dcdcdc] pl-px leading-[17px]">2,612,000</div>
        </div>
        <div className="border-l-black pl-px pt-px">
          <div className="flex h-[17px] w-[223px] border border-r-0 border-[#dcdcdc]">
            <span className="flex-1 leading-[15px]">
              <Fit w={183}>GOTHERS-0918 - Chi phí khác-0918</Fit>
            </span>
            <span className="flex w-[17px] items-center bg-[#dddddd] pl-[4px]">
              <Down />
            </span>
          </div>
          <div className="mt-px flex h-[19px] w-[93px] items-center justify-center rounded-[1px] border border-[#9b9b9b] bg-[linear-gradient(to_bottom,#f3f3f3,#dedede)]">
            <Fit w={73}>Check Budget!</Fit>
          </div>
        </div>
        <div className="col-span-2 border-l-black pl-[39px] font-bold">
          <Fit w={94}>
            <Vi>Tổng cộng (</Vi>
            <i>Total</i>)
          </Fit>
        </div>
        <div className="border-l-[#4f81bd]" />
        <div className="border-l-[#4f81bd] pl-[2px] pt-[2px]">2,612,000</div>
        <div className="border-l-black" />
      </div>
      <div className="mt-px">
        <InsertItem />
      </div>
    </div>
  );
}

/* ---------- bottom task bar ---------- */

const tasks: { icon: ReactNode; text: string; w: number; state?: "on" | "glow" }[] = [
  { icon: <Cube />, text: "staging…", w: 46 },
  { icon: <FzSmall />, text: "10.30.8.…", w: 49 },
  { icon: <Chrome s={15} />, text: "FA_Pay…", w: 43, state: "on" },
  { icon: <Netlock />, text: "Networ…", w: 45 },
  { icon: <Skype />, text: "lemaitr…", w: 45 },
  { icon: <Skype />, text: "File Tra…", w: 43 },
  { icon: <Chat />, text: "Custom…", w: 47 },
  { icon: <Notepad />, text: "server.l…", w: 46 },
  { icon: <Cabinet />, text: "Plugin", w: 30 },
  { icon: <Chrome s={15} />, text: "502 Bad…", w: 48 },
  { icon: <Chat />, text: "VNG - P…", w: 45 },
  { icon: <Firefox s={15} />, text: "Inbox (…", w: 44 },
  { icon: <PageShot />, text: "123Pay …", w: 48, state: "glow" },
  { icon: <Stamp />, text: "123Pay.…", w: 49 },
];

function TaskBar() {
  return (
    <div className="absolute bottom-0 left-[43px] right-0 h-[30px] rounded-l-[8px] bg-black/90">
      <div className="flex h-[30px] w-[1282px] items-center rounded-[8px] border-2 border-[#2c2c2c] bg-[radial-gradient(ellipse_90px_30px_at_470px_0px,#284a5e_0%,transparent_100%),radial-gradient(ellipse_80px_30px_at_1015px_100%,#27506b_0%,transparent_100%)] pl-[8.500px] font-['DejaVu_Sans',sans-serif] text-[10px] text-[#c3c3c3]">
        <div className="flex gap-[2.500px]">
          {tasks.map((t, i) => (
            <div
              key={i}
              className={`flex h-[20px] w-[78px] shrink-0 items-center justify-center gap-[5px] rounded-[5px] ${
                t.state === "on" ? "bg-[#6a6a6a] text-white" : t.state === "glow" ? "bg-[#2f4554]" : "bg-[#282828]"
              }`}
            >
              {t.icon}
              <Fit w={t.w}>{t.text}</Fit>
            </div>
          ))}
        </div>
        <svg className="ml-[8px] shrink-0" width="16" height="9" viewBox="0 0 16 9">
          <rect x=".5" y=".5" width="15" height="8" rx="1" fill="#333" stroke="#b9b9b9" />
          <path d="M2 3H14M2 5H14" stroke="#c9c9c9" strokeDasharray="1.300 .8" />
          <path d="M4 7H12" stroke="#c9c9c9" />
        </svg>
        <div className="ml-[8px] flex w-[106px] shrink-0 flex-col items-center text-[#d4d4d4]">
          <Fit w={32} className="text-[11px] leading-[12px]">
            11:01
          </Fit>
          <Fit w={105} className="text-[8.500px] leading-[11px]">
            Thứ tư 09 Tháng mười hai
          </Fit>
        </div>
      </div>
    </div>
  );
}

export default function App() {
  return (
    <div className="relative flex h-[768px] w-[1366px] flex-col overflow-hidden bg-white">
      <TopPanel />
      <div className="flex h-[744px] overflow-hidden">
        <Launcher />
        <div className="flex flex-1 flex-col">
          <div className="isolate flex h-[25px] shrink-0 bg-[#3c3b37] pl-[7px]">
            {tabs.map((t, i) => (
              <Tab key={i} t={t} z={t.active ? 30 : 20 - i} />
            ))}
            <svg className="ml-[8px] shrink-0" width="32" height="25" viewBox="0 0 32 25">
              <path d="M1 6.500H25Q26 6.500 27 8.500L31 19.500H8Q6 19.500 5 18Z" fill="#9e9d9a" stroke="#b5b4b1" strokeWidth=".7" />
            </svg>
            <svg className="ml-[6px] shrink-0" width="25" height="19" viewBox="0 0 25 19">
              <rect x=".5" y="2.500" width="24" height="16" rx="2" fill="#33322e" stroke="#66645e" />
              <circle cx="12.500" cy="8" r="2.600" fill="#d9d7d2" />
              <path d="M8 14Q8 10.500 12.500 10.500Q17 10.500 17 14Z" fill="#d9d7d2" />
            </svg>
          </div>
          <Toolbar />
          <div className="flex flex-1 overflow-hidden">
            <div className="flex flex-1 flex-col pl-[206px] pr-[206px] font-['Liberation_Serif','Times_New_Roman',serif]">
              <Request />
              <Tables />
            </div>
            <div className="flex w-[15px] shrink-0 flex-col items-center bg-[#f1f1f1] pb-[29px]">
              <svg className="mt-[6px]" width="7" height="4" viewBox="0 0 7 4">
                <path d="M0 4L3.500 0L7 4Z" fill="#505050" />
              </svg>
              <div className="mt-[77px] h-[288px] w-[11px] border border-[#a8a8a8] bg-[#c1c1c1]" />
              <div className="flex-1" />
              <svg className="mb-[6px]" width="7" height="4" viewBox="0 0 7 4">
                <path d="M0 0L3.500 4L7 0Z" fill="#505050" />
              </svg>
            </div>
          </div>
        </div>
      </div>
      <TaskBar />
    </div>
  );
}
